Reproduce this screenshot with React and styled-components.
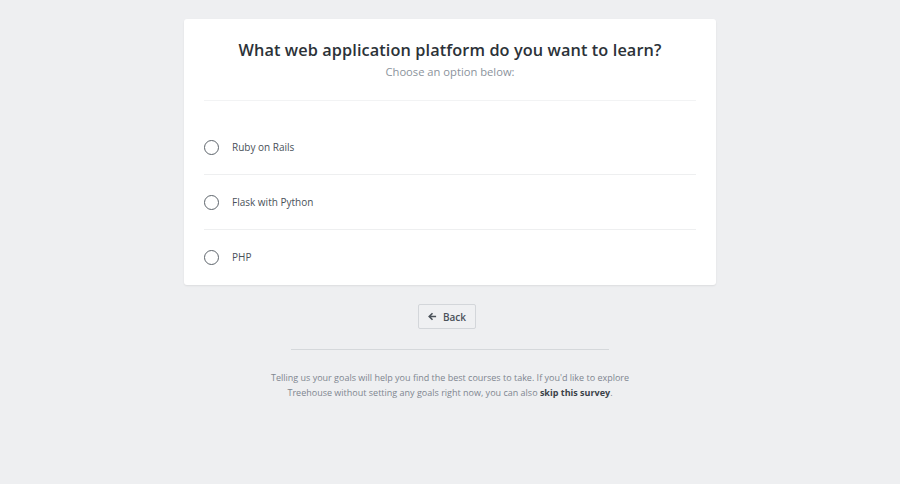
import React from 'react';
import styled, { createGlobalStyle } from 'styled-components';

const GlobalStyle = createGlobalStyle`
  html, body {
    margin: 0;
    padding: 0;
    background: #eeeff1;
    font-family: "Open Sans", "Liberation Sans", sans-serif;
  }
`;

const Page = styled.div`
  display: flex;
  flex-direction: column;
  align-items: center;
  padding-top: 19px;
  min-height: 484px;
  box-sizing: border-box;
`;

const Card = styled.div`
  width: 532px;
  background: #fff;
  border-radius: 3px;
  box-shadow: 0 1px 2px rgba(0,0,0,0.08);
  padding: 0 20px;
  box-sizing: border-box;
`;

const Header = styled.div`
  text-align: center;
  padding: 19px 0 19px;
  border-bottom: 1px solid #f2f3f4;
  margin-bottom: 19px;
`;

const Title = styled.h1`
  margin: 0;
  font-size: 16.3px;
  font-weight: 600;
  color: #2c3238;
  line-height: 24px;
  letter-spacing: 0.1px;
`;

const Subtitle = styled.div`
  font-size: 11.2px;
  color: #8b939c;
  margin-top: 1px;
  line-height: 18px;
`;

const Option = styled.label`
  display: flex;
  align-items: center;
  height: 55px;
  box-sizing: border-box;
  border-bottom: 1px solid ${p => (p.last ? 'transparent' : '#eeeff0')};
  cursor: pointer;
`;

const Radio = styled.span`
  width: 13px;
  height: 13px;
  border: 1.5px solid #5d646b;
  border-radius: 50%;
  margin-right: 13px;
  flex-shrink: 0;
`;

const OptionText = styled.span`
  font-size: 10px;
  color: #4a5159;
`;

const BackButton = styled.button`
  margin: 19px 6px 0 0;
  display: flex;
  align-items: center;
  gap: 6px;
  height: 25px;
  padding: 0 9px;
  background: #eff0f2;
  border: 1px solid #d3d6da;
  border-radius: 2px;
  font-family: inherit;
  font-size: 10px;
  font-weight: 600;
  color: #4a5159;
  cursor: pointer;
`;

const Rule = styled.hr`
  width: 318px;
  border: none;
  border-top: 1px solid #d5d8db;
  margin: 20px 0 0;
`;

const Footer = styled.p`
  margin: 20px 0 0;
  width: 380px;
  text-align: center;
  font-size: 9px;
  line-height: 15px;
  color: #7e8690;
`;

const Strong = styled.b`
  color: #3b4249;
  font-weight: 700;
`;

const options = ['Ruby on Rails', 'Flask with Python', 'PHP'];

const App = () => {
  return (
    <Page>
      <GlobalStyle />
      <Card>
        <Header>
          <Title>What web application platform do you want to learn?</Title>
          <Subtitle>Choose an option below:</Subtitle>
        </Header>
        {options.map((opt, i) => (
          <Option key={opt} last={i === options.length - 1}>
            <Radio />
            <OptionText>{opt}</OptionText>
          </Option>
        ))}
      </Card>
      <BackButton>
        <svg width="9" height="9" viewBox="0 0 10 10" fill="none" stroke="#4a5159" strokeWidth="1.7">
          <path d="M9 5H1.5M5 1.3L1.3 5 5 8.7" />
        </svg>
        Back
      </BackButton>
      <Rule />
      <Footer>
        Telling us your goals will help you find the best courses to take. If you'd like to explore
        Treehouse without setting any goals right now, you can also <Strong>skip this survey</Strong>.
      </Footer>
    </Page>
  );
};

export default App;
